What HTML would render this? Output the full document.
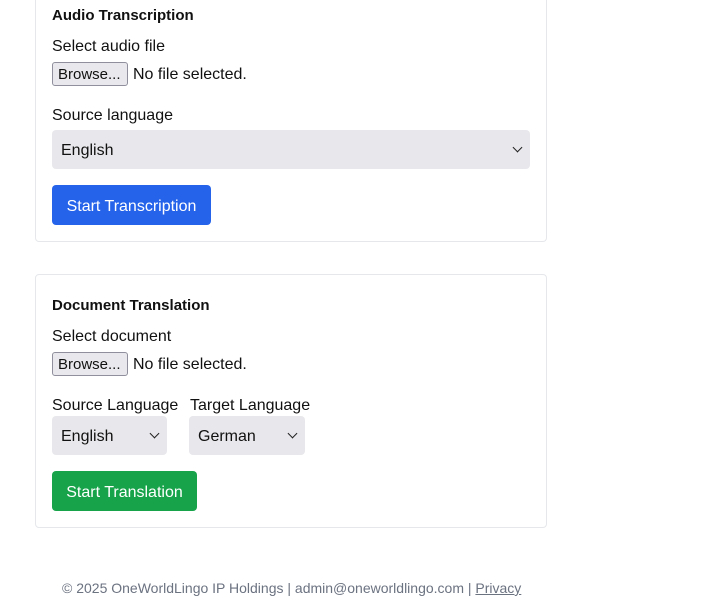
<!DOCTYPE html>
<html><head><meta charset="utf-8"><style>
*{box-sizing:border-box;margin:0;padding:0}
body{width:716px;height:608px;background:#fff;font-family:"Liberation Sans",sans-serif;color:#111;position:relative;overflow:hidden;font-size:16px}
.a{position:absolute;white-space:nowrap}
.card{position:absolute;left:35px;width:512px;border:1px solid #e5e7eb;border-radius:4px;background:#fff}
.h{font-weight:bold;font-size:15px}
.br{position:absolute;height:24px;border:1px solid #8f8f9d;border-radius:3px;background:#e9e9ed;font-size:15px;line-height:23px;padding:0 5px;color:#111}
.sel{position:absolute;background:#e8e8ec;border-radius:4px;height:39px;line-height:41px;padding-left:9px;font-size:16px}
.chev{position:absolute;right:9px;width:7px;height:7px;border-right:1.8px solid #222;border-bottom:1.8px solid #222;transform:rotate(45deg)}
.btn{position:absolute;color:#fff;border-radius:4px;height:40px;line-height:43px;text-align:center;font-size:16px}
</style></head><body>
<div class="card" style="top:-10px;height:252px"></div>
<div class="a h" style="left:52px;top:7px">Audio Transcription</div>
<div class="a" style="left:52px;top:38px">Select audio file</div>
<div class="br" style="left:52px;top:62px;width:76px">Browse...</div>
<div class="a" style="left:133px;top:66px">No file selected.</div>
<div class="a" style="left:52px;top:107px">Source language</div>
<div class="sel" style="left:52px;top:130px;width:478px">English<span class="chev" style="top:14px"></span></div>
<div class="btn" style="left:52px;top:185px;width:159px;background:#2563eb">Start Transcription</div>

<div class="card" style="top:274px;height:254px"></div>
<div class="a h" style="left:52px;top:297px">Document Translation</div>
<div class="a" style="left:52px;top:328px">Select document</div>
<div class="br" style="left:52px;top:352px;width:76px">Browse...</div>
<div class="a" style="left:133px;top:356px">No file selected.</div>
<div class="a" style="left:52px;top:397px">Source Language</div>
<div class="a" style="left:190px;top:397px">Target Language</div>
<div class="sel" style="left:52px;top:416px;width:115px">English<span class="chev" style="top:14px"></span></div>
<div class="sel" style="left:189px;top:416px;width:116px">German<span class="chev" style="top:14px"></span></div>
<div class="btn" style="left:52px;top:471px;width:145px;background:#16a34a">Start Translation</div>

<div class="a" style="left:62px;top:580px;color:#6b7280;font-size:14px">© 2025 OneWorldLingo IP Holdings | admin@oneworldlingo.com | <u>Privacy</u></div>
</body></html>
